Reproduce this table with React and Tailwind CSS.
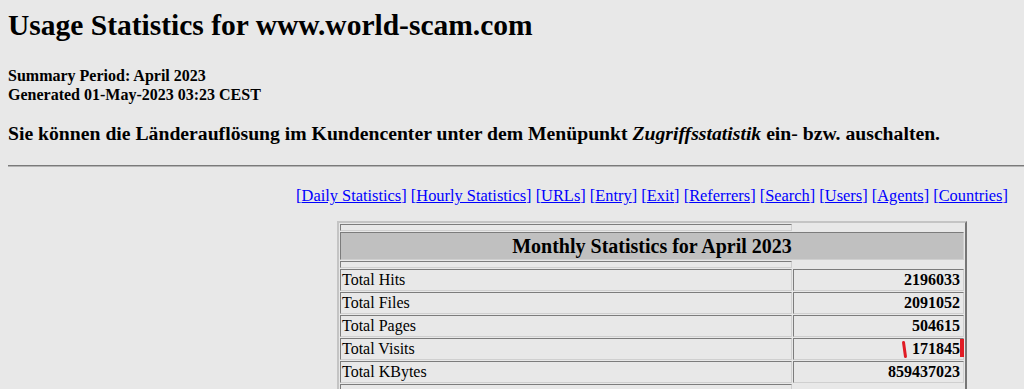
import React from 'react';

const links = [
  'Daily Statistics',
  'Hourly Statistics',
  'URLs',
  'Entry',
  'Exit',
  'Referrers',
  'Search',
  'Users',
  'Agents',
  'Countries',
];

const totals = [
  { label: 'Total Hits', value: '2196033' },
  { label: 'Total Files', value: '2091052' },
  { label: 'Total Pages', value: '504615' },
  { label: 'Total Visits', value: '171845', marked: true },
  { label: 'Total KBytes', value: '859437023' },
];

// inset cell borders, like an old html table with border=2
const cell = 'border border-t-[#7c7c7c] border-l-[#7c7c7c] border-b-[#cfcfcf] border-r-[#cfcfcf] p-[1px]';

const Spacer = () => (
  <tr>
    <th className={`${cell} p-0`}>
      <div className="h-[3px]" />
    </th>
  </tr>
);

const Row = ({ label, value, marked }) => (
  <tr>
    <td className={`${cell} text-left text-[16px] leading-[18px]`}>{label}</td>
    <td className={`${cell} relative pr-[3px] text-right text-[16px] leading-[18px] font-bold`}>
      {value}
      {marked && (
        <>
          <span className="absolute left-[109px] top-[2px] h-[17px] w-[3px] rotate-[-8deg] rounded-full bg-[#e01b24]" />
          <span className="absolute right-[-1px] top-[0px] h-[18px] w-[4px] bg-[#e01b24]" />
        </>
      )}
    </td>
  </tr>
);

export default function App() {
  return (
    <div className="h-screen w-full overflow-hidden bg-[#e8e8e8]">
      <div className="w-[1304px] px-2 pt-2 font-['Liberation_Serif','Times_New_Roman',serif] text-black">
        <h2 className="text-[29.5px] font-bold leading-[34px]">Usage Statistics for www.world-scam.com</h2>

        <div className="mt-6 text-[16px] font-bold leading-[19px]">
          <div>Summary Period: April 2023</div>
          <div>Generated 01-May-2023 03:23 CEST</div>
        </div>

        <p className="mt-[18px] text-[19.7px] font-bold leading-[23px]">
          Sie können die Länderauflösung im Kundencenter unter dem Menüpunkt <i>Zugriffsstatistik</i> ein- bzw. auschalten.
        </p>

        <hr className="mt-5 h-0 border-0 border-t border-b border-t-[#7a7a7a] border-b-[#b4b4b4]" />

        <div className="mt-[19px] text-center text-[16.4px] leading-[19px]">
          {links.map((l, i) => (
            <React.Fragment key={l}>
              {i > 0 && ' '}
              <a href="#" className="text-[#0000ff] underline">[{l}]</a>
            </React.Fragment>
          ))}
        </div>

        <table className="mx-auto mt-4 w-[630px] table-fixed border-separate border-spacing-[1px] border-2 border-t-[#c4c4c4] border-l-[#c4c4c4] border-b-[#767676] border-r-[#767676]">
          <colgroup>
            <col className="w-[452px]" />
            <col />
          </colgroup>
          <tbody>
            <Spacer />
            <tr>
              <th colSpan={2} className={`${cell} bg-[#c0c0c0] text-center text-[20px] font-bold leading-[24px]`}>
                Monthly Statistics for April 2023
              </th>
            </tr>
            <Spacer />
            {totals.map((r) => (
              <Row key={r.label} {...r} />
            ))}
            <Spacer />
          </tbody>
        </table>
      </div>
    </div>
  );
}
